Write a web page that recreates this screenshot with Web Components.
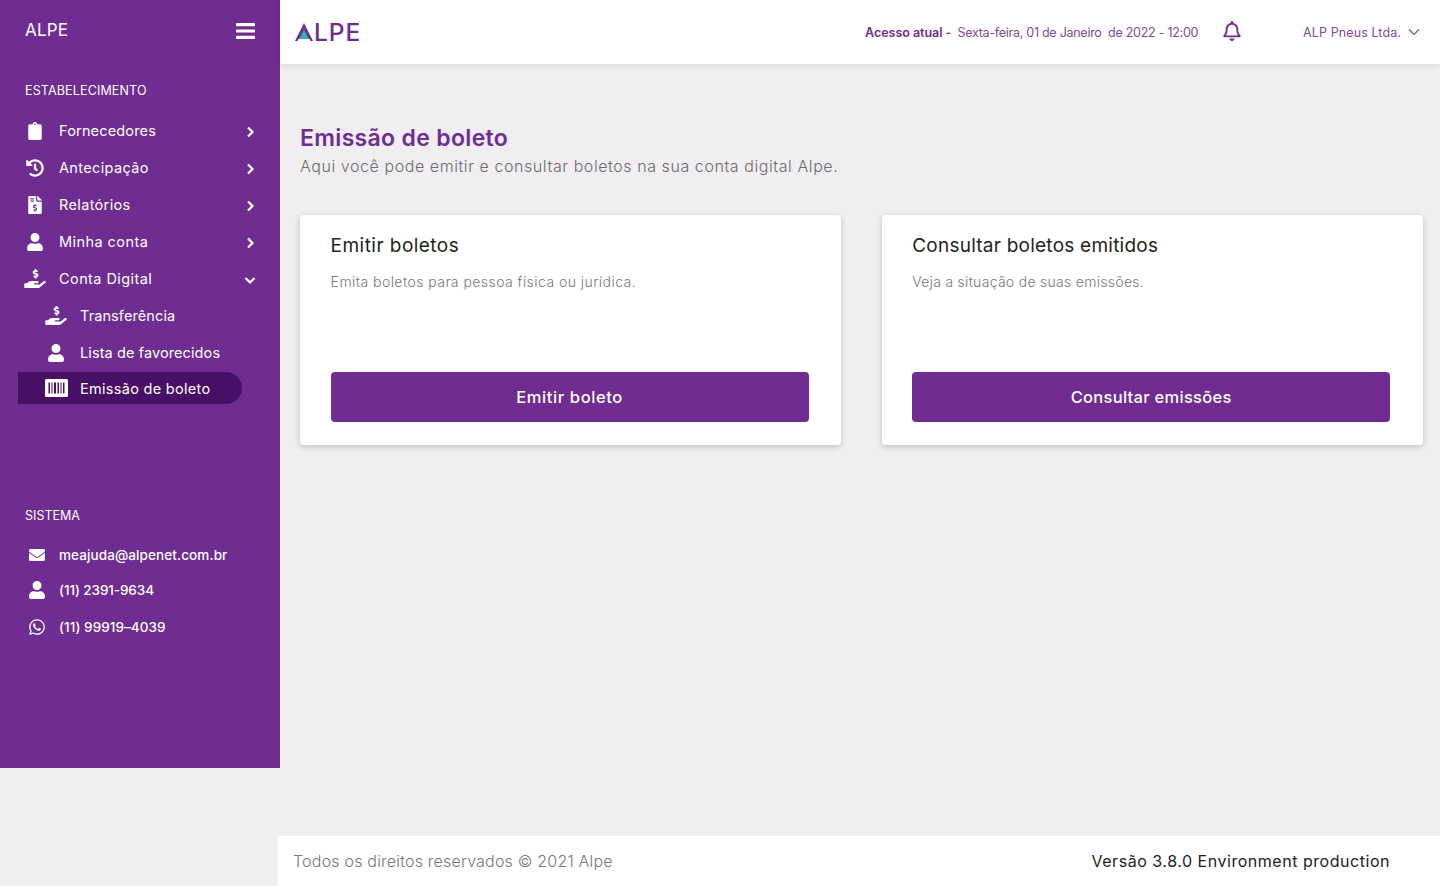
<!DOCTYPE html>
<html lang="pt-BR">
<head>
<meta charset="utf-8">
<title>Alpe</title>
<style>
  html, body { margin: 0; height: 100%; }
  body {
    background: #f0eef1;
    font-family: Inter, "Liberation Sans", sans-serif;
    overflow: hidden;
  }
</style>
</head>
<body>
<alpe-app>
  <alpe-sidebar slot="side">
    <alpe-section slot="first" label="ESTABELECIMENTO">
      <alpe-nav-item icon="clipboard" arrow="right" style="letter-spacing:.17px">Fornecedores</alpe-nav-item>
      <alpe-nav-item icon="history" arrow="right" style="letter-spacing:.35px">Antecipação</alpe-nav-item>
      <alpe-nav-item icon="invoice" arrow="right" style="letter-spacing:.35px">Relatórios</alpe-nav-item>
      <alpe-nav-item icon="user" arrow="right" style="letter-spacing:.43px">Minha conta</alpe-nav-item>
      <alpe-nav-item icon="hand" arrow="down" style="letter-spacing:.42px">Conta Digital</alpe-nav-item>
      <alpe-nav-item icon="hand" sub style="letter-spacing:.1px">Transferência</alpe-nav-item>
      <alpe-nav-item icon="user" sub style="letter-spacing:.1px">Lista de favorecidos</alpe-nav-item>
      <alpe-nav-item icon="barcode" sub active style="letter-spacing:.3px">Emissão de boleto</alpe-nav-item>
    </alpe-section>
    <alpe-section slot="second" label="SISTEMA">
      <alpe-nav-item icon="envelope" system style="height:35px;letter-spacing:.1px">meajuda@alpenet.com.br</alpe-nav-item>
      <alpe-nav-item icon="user" system style="height:35px;letter-spacing:-.1px">(11) 2391-9634</alpe-nav-item>
      <alpe-nav-item icon="whatsapp" system style="height:40px">(11) 99919–4039</alpe-nav-item>
    </alpe-section>
  </alpe-sidebar>

  <alpe-topbar slot="top"></alpe-topbar>

  <alpe-page-title slot="main" heading="Emissão de boleto">Aqui você pode emitir e consultar boletos na sua conta digital Alpe.</alpe-page-title>
  <alpe-cards slot="main">
    <alpe-card heading="Emitir boletos" action="Emitir boleto" style="--h-ls:.46px;--p-ls:.45px;--b-ls:.6px">Emita boletos para pessoa física ou jurídica.</alpe-card>
    <alpe-card heading="Consultar boletos emitidos" action="Consultar emissões" style="--h-ls:.24px;--p-ls:.29px;--b-ls:.28px">Veja a situação de suas emissões.</alpe-card>
  </alpe-cards>

  <alpe-footer slot="foot"></alpe-footer>
</alpe-app>

<script>
const ICONS = {
  clipboard: ["0 0 384 512", "M336 64h-80c0-35.3-28.7-64-64-64s-64 28.7-64 64H48C21.5 64 0 85.5 0 112v352c0 26.5 21.5 48 48 48h288c26.5 0 48-21.5 48-48V112c0-26.5-21.5-48-48-48zM192 40c13.3 0 24 10.7 24 24s-10.7 24-24 24-24-10.7-24-24 10.7-24 24-24z"],
  history: ["0 0 512 512", "M504 255.531c.253 136.64-111.18 248.372-247.82 248.468-59.015.042-113.223-20.53-155.822-54.911-11.077-8.94-11.905-25.541-1.839-35.607l11.267-11.267c8.609-8.609 22.353-9.551 31.891-1.984C173.062 425.135 212.781 440 256 440c101.705 0 184-82.311 184-184 0-101.705-82.311-184-184-184-48.814 0-93.149 18.969-126.068 49.932l50.754 50.754c10.08 10.08 2.941 27.314-11.313 27.314H24c-8.837 0-16-7.163-16-16V38.627c0-14.254 17.234-21.393 27.314-11.314l49.372 49.372C129.209 34.136 189.552 8 256 8c136.81 0 247.747 110.78 248 247.531zm-180.912 78.784l9.823-12.63c8.138-10.463 6.253-25.542-4.21-33.679L288 256.349V152c0-13.255-10.745-24-24-24h-16c-13.255 0-24 10.745-24 24v135.651l65.409 50.874c10.463 8.137 25.541 6.253 33.679-4.21z"],
  invoice: ["0 0 384 512", "M377 105L279.1 7c-4.5-4.5-10.6-7-17-7H256v128h128v-6.1c0-6.3-2.5-12.4-7-16.9zm-153 31V0H24C10.7 0 0 10.7 0 24v464c0 13.3 10.7 24 24 24h336c13.3 0 24-10.7 24-24V160H248c-13.2 0-24-10.8-24-24zM64 72c0-4.42 3.58-8 8-8h80c4.42 0 8 3.58 8 8v16c0 4.42-3.58 8-8 8H72c-4.42 0-8-3.58-8-8V72zm0 80v-16c0-4.42 3.58-8 8-8h80c4.42 0 8 3.58 8 8v16c0 4.42-3.58 8-8 8H72c-4.42 0-8-3.58-8-8zm144 263.88V440c0 4.42-3.58 8-8 8h-16c-4.42 0-8-3.58-8-8v-24.29c-11.29-.58-22.27-4.52-31.37-11.35-3.9-2.93-4.1-8.77-.57-12.14l11.75-11.21c2.77-2.64 6.89-2.76 10.13-.73 3.87 2.42 8.26 3.72 12.82 3.72h28.11c6.5 0 11.8-5.92 11.8-13.19 0-5.95-3.61-11.19-8.77-12.73l-45-13.5c-18.59-5.58-31.58-23.42-31.58-43.39 0-24.52 19.05-44.44 42.67-45.07V232c0-4.42 3.58-8 8-8h16c4.42 0 8 3.58 8 8v24.29c11.29.58 22.27 4.51 31.37 11.35 3.9 2.93 4.1 8.77.57 12.14l-11.75 11.21c-2.77 2.64-6.89 2.76-10.13.73-3.87-2.43-8.26-3.72-12.82-3.72h-28.11c-6.5 0-11.8 5.92-11.8 13.19 0 5.95 3.61 11.19 8.77 12.73l45 13.5c18.59 5.58 31.58 23.42 31.58 43.39 0 24.53-19.05 44.44-42.67 45.07z"],
  user: ["0 0 448 512", "M224 256c70.7 0 128-57.3 128-128S294.7 0 224 0 96 57.3 96 128s57.3 128 128 128zm89.6 32h-16.7c-22.2 10.2-46.9 16-72.9 16s-50.6-5.8-72.9-16h-16.7C60.2 288 0 348.2 0 422.4V464c0 26.5 21.5 48 48 48h352c26.5 0 48-21.5 48-48v-41.6c0-74.2-60.2-134.4-134.4-134.4z"],
  hand: ["0 0 576 512", "M271.06,144.3l54.27,14.3a8.59,8.59,0,0,1,6.63,8.1c0,4.6-4.09,8.4-9.12,8.4h-35.6a30,30,0,0,1-11.19-2.2c-5.24-2.2-11.28-1.7-15.3,2l-19,17.5a11.68,11.68,0,0,0-2.25,2.66,11.42,11.42,0,0,0,3.88,15.74,83.42,83.42,0,0,0,34.51,11.5V240c0,8.8,7.83,16,17.37,16h17.37c9.55,0,17.38-7.2,17.38-16V222.4c32.93-3.6,57.84-31,53.5-63-3.15-23-22.46-41.3-46.56-47.7L282.68,97.4a8.59,8.59,0,0,1-6.63-8.1c0-4.6,4.09-8.4,9.12-8.4h35.6A30,30,0,0,1,332,83.1c5.23,2.2,11.28,1.7,15.3-2l19-17.5A11.31,11.31,0,0,0,368.47,61a11.43,11.43,0,0,0-3.84-15.78,83.82,83.82,0,0,0-34.52-11.5V16c0-8.8-7.82-16-17.37-16H295.37C285.82,0,278,7.2,278,16V33.6c-32.89,3.6-57.85,31-53.51,63C227.63,119.6,247,137.9,271.06,144.3ZM565.27,328.1c-11.8-10.7-30.2-10-42.6,0L430.27,402a63.64,63.64,0,0,1-40,14H272a16,16,0,0,1,0-32h78.29c15.9,0,30.71-10.9,33.25-26.6a31.2,31.2,0,0,0,.46-5.46A32,32,0,0,0,352,320H192a117.66,117.66,0,0,0-74.1,26.29L71.4,384H16A16,16,0,0,0,0,400v96a16,16,0,0,0,16,16H372.77a64,64,0,0,0,40-14L564,377a32,32,0,0,0,1.28-48.9Z"],
  barcode: ["0 0 23 18", "M1.500 0h20A1.500 1.500 0 0 1 23 1.500v15a1.500 1.500 0 0 1-1.500 1.500h-20A1.500 1.500 0 0 1 0 16.500v-15A1.500 1.500 0 0 1 1.500 0zM3.500 3.500v11h1.500v-11zm3 0v11h1v-11zm2.500 0v11h2v-11zm3.500 0v11h1.500v-11zm3 0v11h1v-11zm2.500 0v11h1.500v-11z"],
  envelope: ["0 0 512 512", "M502.3 190.8c3.9-3.1 9.7-.2 9.7 4.7V400c0 26.5-21.5 48-48 48H48c-26.5 0-48-21.500-48-48V195.600c0-5 5.700-7.800 9.700-4.700 22.400 17.400 52.100 39.500 154.100 113.600 21.100 15.400 56.700 47.800 92.200 47.600 35.700.300 72-32.800 92.300-47.600 102-74.100 131.600-96.300 154-113.700zM256 320c23.200.400 56.600-29.200 73.400-41.400 132.700-96.300 142.800-104.700 173.400-128.700 5.800-4.500 9.200-11.500 9.200-18.900v-19c0-26.500-21.500-48-48-48H48C21.500 64 0 85.500 0 112v19c0 7.400 3.400 14.300 9.200 18.900 30.600 23.900 40.700 32.400 173.400 128.700 16.800 12.200 50.200 41.800 73.400 41.400z"],
  whatsapp: ["0 0 448 512", "M380.900 97.100C339 55.100 283.200 32 223.900 32c-122.400 0-222 99.600-222 222 0 39.100 10.200 77.300 29.600 111L0 480l117.700-30.900c32.400 17.700 68.900 27 106.100 27h.100c122.300 0 224.100-99.600 224.100-222 0-59.300-25.200-115-67.100-157zm-157 341.600c-33.200 0-65.700-8.900-94-25.700l-6.700-4-69.800 18.300L72 359.200l-4.400-7c-18.500-29.400-28.200-63.300-28.200-98.200 0-101.700 82.800-184.500 184.600-184.500 49.300 0 95.600 19.200 130.400 54.100 34.800 34.900 56.200 81.200 56.100 130.500 0 101.800-84.900 184.600-186.600 184.600zm101.200-138.200c-5.500-2.800-32.800-16.200-37.900-18-5.100-1.900-8.800-2.800-12.500 2.800-3.700 5.600-14.300 18-17.600 21.800-3.200 3.700-6.500 4.200-12 1.400-32.600-16.300-54-29.100-75.500-66-5.700-9.800 5.700-9.100 16.300-30.300 1.800-3.700.900-6.900-.500-9.700-1.400-2.800-12.500-30.100-17.100-41.200-4.500-10.800-9.100-9.300-12.500-9.500-3.200-.200-6.900-.200-10.600-.200-3.700 0-9.700 1.400-14.800 6.900-5.100 5.600-19.400 19-19.400 46.300 0 27.300 19.900 53.700 22.600 57.400 2.800 3.700 39.100 59.700 94.800 83.800 35.200 15.200 49 16.500 66.600 13.900 10.700-1.600 32.800-13.400 37.400-26.400 4.600-13 4.600-24.100 3.200-26.400-1.300-2.500-5-3.900-10.500-6.600z"],
  bell: ["0 0 448 512", "M439.39 362.29c-19.32-20.76-55.47-51.99-55.47-154.29 0-77.7-54.48-139.9-127.94-155.16V32c0-17.67-14.32-32-31.98-32s-31.98 14.33-31.98 32v20.84C118.56 68.1 64.08 130.3 64.08 208c0 102.3-36.15 133.53-55.47 154.29-6 6.45-8.66 14.16-8.61 21.71.11 16.4 12.98 32 32.1 32h383.8c19.12 0 32-15.6 32.1-32 .05-7.55-2.61-15.27-8.61-21.71zM67.53 368c21.22-27.97 44.42-74.33 44.53-159.42 0-.2-.06-.38-.06-.58 0-61.86 50.14-112 112-112s112 50.14 112 112c0 .2-.06.38-.06.58.11 85.1 23.31 131.46 44.53 159.42H67.53zM224 512c35.32 0 63.97-28.65 63.97-64H160.03c0 35.35 28.65 64 63.97 64z"]
};

// shared size table, [width, height] in px
const NAV_ICON_SIZE = {
  clipboard: [14, 18], history: [18, 18], invoice: [14, 18], user: [16, 18],
  hand: [22, 19], barcode: [23, 18], envelope: [16, 16], whatsapp: [18, 18]
};

function iconSvg(name, w, h) {
  const [box, d] = ICONS[name];
  return `<svg width="${w}" height="${h}" viewBox="${box}" fill="currentColor" aria-hidden="true"><path fill-rule="evenodd" d="${d}"/></svg>`;
}

class AlpeApp extends HTMLElement {
  constructor() {
    super();
    this.attachShadow({ mode: "open" }).innerHTML = `
      <style>
        :host { display: flex; flex-direction: column; height: 886px; }
        .upper { display: flex; align-items: flex-start; height: 836px; }
        .content { flex: 1; min-width: 0; }
        .inner { padding: 59px 17px 0 20px; }
        .foot { margin-left: 278px; }
      </style>
      <div class="upper">
        <slot name="side"></slot>
        <div class="content">
          <slot name="top"></slot>
          <div class="inner"><slot name="main"></slot></div>
        </div>
      </div>
      <div class="foot"><slot name="foot"></slot></div>
    `;
  }
}

class AlpeSidebar extends HTMLElement {
  constructor() {
    super();
    this.attachShadow({ mode: "open" }).innerHTML = `
      <style>
        :host { display: block; width: 280px; height: 768px; flex: none; background: #6f2c91; color: #fff; }
        .head { height: 60px; display: flex; align-items: center; justify-content: space-between; padding: 0 25px; box-sizing: border-box; }
        .brand { font-size: 17px; letter-spacing: .2px; }
        .burger { display: block; width: 19px; height: 16px; margin-top: 2px; }
        .first { padding-top: 21px; }
        .second { padding-top: 102px; }
      </style>
      <div class="head">
        <span class="brand">ALPE</span>
        <svg class="burger" viewBox="0 0 19 16" fill="#fff"><rect width="19" height="3.200" rx=".8"/><rect y="6.400" width="19" height="3.200" rx=".8"/><rect y="12.800" width="19" height="3.200" rx=".8"/></svg>
      </div>
      <div class="first"><slot name="first"></slot></div>
      <div class="second"><slot name="second"></slot></div>
    `;
  }
}

class AlpeSection extends HTMLElement {
  constructor() {
    super();
    this.attachShadow({ mode: "open" }).innerHTML = `
      <style>
        :host { display: block; }
        .label { height: 20px; line-height: 20px; padding-left: 25px; font-size: 12.500px; letter-spacing: .15px; margin-bottom: 11px; }
        :host([label="SISTEMA"]) .label { letter-spacing: 0; }
      </style>
      <div class="label"></div>
      <slot></slot>
    `;
  }
  connectedCallback() {
    this.shadowRoot.querySelector(".label").textContent = this.getAttribute("label");
  }
}

class AlpeNavItem extends HTMLElement {
  constructor() {
    super();
    this.attachShadow({ mode: "open" }).innerHTML = `
      <style>
        :host { display: flex; align-items: center; height: 37px; padding-left: 25px; padding-right: 25px; box-sizing: border-box; font-size: 14.500px; letter-spacing: .25px; color: #fff; }
        :host([sub]) { padding-left: 46px; }
        :host([active]) { height: 32px; margin: 1px 0 0 18px; width: 224px; padding-left: 28px; background: #470f66; border-radius: 0 16px 16px 0; }
        :host([system]) { height: 36px; font-size: 13.500px; font-weight: 500; letter-spacing: .05px; }
        .ico { width: 20px; height: 20px; display: flex; align-items: center; justify-content: center; flex: none; margin-right: 14px; }
        :host([system]) .ico { transform: translateX(2px); }
        .txt { flex: 1; white-space: nowrap; }
        svg { display: block; flex: none; }
        .arrow { width: 9px; height: 12px; transform: translateY(1px); }
      </style>
      <span class="ico"></span>
      <span class="txt"><slot></slot></span>
      <span class="end"></span>
    `;
  }
  connectedCallback() {
    const name = this.getAttribute("icon");
    const [w, h] = NAV_ICON_SIZE[name];
    this.shadowRoot.querySelector(".ico").innerHTML = iconSvg(name, w, h);
    const arrow = this.getAttribute("arrow");
    const end = this.shadowRoot.querySelector(".end");
    if (arrow === "right") {
      end.innerHTML = `<svg class="arrow" viewBox="0 0 9 12" fill="none" stroke="#fff" stroke-width="2.200"><path d="M2 1.500 6.500 6 2 10.500"/></svg>`;
    }
    if (arrow === "down") {
      end.innerHTML = `<svg class="arrow" style="width:12px;transform:translate(1px,1px)" viewBox="0 0 12 12" fill="none" stroke="#fff" stroke-width="2.200"><path d="M1.500 4 6 8.500 10.500 4"/></svg>`;
    }
  }
}

class AlpeTopbar extends HTMLElement {
  constructor() {
    super();
    this.attachShadow({ mode: "open" }).innerHTML = `
      <style>
        :host { display: flex; align-items: center; height: 64px; background: #fff; box-shadow: 0 2px 6px rgba(0,0,0,.09); padding: 0 20px 0 15px; color: #6f2c91; font-size: 12.500px; }
        .logo { display: flex; align-items: center; font-size: 24.500px; letter-spacing: 1px; font-weight: 500; margin-right: auto; }
        .logo svg { display: block; margin-right: 1px; }
        b { font-weight: 600; margin-right: 6px; letter-spacing: -.03px; }
        .when { color: #7d4a9b; white-space: pre; letter-spacing: -.27px; }
        .bell { margin: 0 62px 0 25px; display: block; }
        .company { color: #7d4a9b; margin-right: 7px; letter-spacing: .1px; }
      </style>
      <div class="logo">
        <svg width="18" height="18" viewBox="0 0 18 18"><path d="M9 0 18 18H15.500L14.500 16H3.500L2.500 18H0z" fill="#6f2c91"/><path d="M9 7 14 16H4z" fill="#2fb6b4"/></svg><span>LPE</span>
      </div>
      <b>Acesso atual -</b>
      <span class="when">Sexta-feira, 01 de Janeiro  de 2022 - 12:00</span>
      <span class="bell"></span>
      <span class="company">ALP Pneus Ltda.</span>
      <svg width="12" height="8" viewBox="0 0 12 8" fill="none" stroke="#7d4a9b" stroke-width="1.200"><path d="M1 1.500 6 6.500 11 1.500"/></svg>
    `;
    this.shadowRoot.querySelector(".bell").innerHTML = iconSvg("bell", 18, 20);
  }
}

class AlpePageTitle extends HTMLElement {
  constructor() {
    super();
    this.attachShadow({ mode: "open" }).innerHTML = `
      <style>
        :host { display: block; margin-bottom: 35px; }
        h1 { margin: 0; font-size: 23px; line-height: 30px; font-weight: 600; color: #6f2c91; letter-spacing: .33px; }
        p { margin: 0; font-size: 16px; line-height: 27px; font-weight: 300; color: #6c6c6c; letter-spacing: .57px; }
      </style>
      <h1></h1>
      <p><slot></slot></p>
    `;
  }
  connectedCallback() {
    this.shadowRoot.querySelector("h1").textContent = this.getAttribute("heading");
  }
}

class AlpeCards extends HTMLElement {
  constructor() {
    super();
    this.attachShadow({ mode: "open" }).innerHTML = `
      <style>
        :host { display: grid; grid-template-columns: 541px 541px; column-gap: 40.600px; }
      </style>
      <slot></slot>
    `;
  }
}

class AlpeCard extends HTMLElement {
  constructor() {
    super();
    this.attachShadow({ mode: "open" }).innerHTML = `
      <style>
        :host { display: flex; flex-direction: column; height: 230px; box-sizing: border-box; padding: 16px 32.400px 23px 30.600px; background: #fff; border-radius: 4px; box-shadow: 0 2px 6px rgba(0,0,0,.2); }
        h2 { margin: 0; font-size: 19px; line-height: 30px; font-weight: 400; color: #222; letter-spacing: var(--h-ls); }
        p { margin: 9px 0 0; font-size: 14px; line-height: 24px; font-weight: 300; color: #777; letter-spacing: var(--p-ls); }
        button { margin-top: auto; height: 50px; border: 0; border-radius: 4px; background: #702c90; color: #fff; font: 500 16.500px Inter, "Liberation Sans", sans-serif; letter-spacing: var(--b-ls); }
      </style>
      <h2></h2>
      <p><slot></slot></p>
      <button type="button"></button>
    `;
  }
  connectedCallback() {
    this.shadowRoot.querySelector("h2").textContent = this.getAttribute("heading");
    this.shadowRoot.querySelector("button").textContent = this.getAttribute("action");
  }
}

class AlpeFooter extends HTMLElement {
  constructor() {
    super();
    this.attachShadow({ mode: "open" }).innerHTML = `
      <style>
        :host { display: flex; align-items: center; justify-content: space-between; height: 50px; background: #fff; padding: 0 50px 0 15px; font-size: 16px; }
        .copy { color: #777; font-weight: 300; letter-spacing: .2px; }
        .ver { color: #222; letter-spacing: .53px; }
      </style>
      <span class="copy">Todos os direitos reservados © 2021 Alpe</span>
      <span class="ver">Versão 3.8.0 Environment production</span>
    `;
  }
}

customElements.define("alpe-app", AlpeApp);
customElements.define("alpe-sidebar", AlpeSidebar);
customElements.define("alpe-section", AlpeSection);
customElements.define("alpe-nav-item", AlpeNavItem);
customElements.define("alpe-topbar", AlpeTopbar);
customElements.define("alpe-page-title", AlpePageTitle);
customElements.define("alpe-cards", AlpeCards);
customElements.define("alpe-card", AlpeCard);
customElements.define("alpe-footer", AlpeFooter);
</script>
</body>
</html>
